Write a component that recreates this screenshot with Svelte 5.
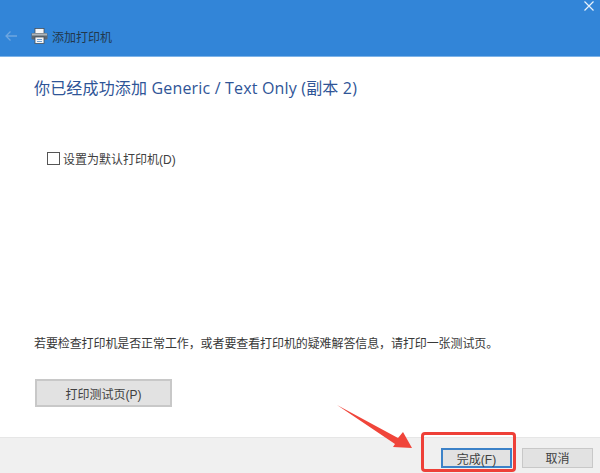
<script>
  let setDefault = false;
</script>

<div class="dialog">
  <header class="titlebar">
    <button class="close" aria-label="关闭">
      <svg width="10" height="10" viewBox="0 0 10 10"><path d="M0.5 0.5 L9.5 9.5 M9.5 0.5 L0.5 9.5" stroke="#e8f2fc" stroke-width="1.2" fill="none" /></svg>
    </button>
    <div class="nav">
      <svg class="back" width="14" height="12" viewBox="0 0 14 12"><path d="M13 6 H2 M6.5 1.5 L2 6 L6.5 10.5" stroke="#6ea6e0" stroke-width="1.3" fill="none" /></svg>
      <svg class="printer" width="17" height="16" viewBox="0 0 17 16">
        <rect x="4" y="0.5" width="9" height="5" fill="#f4f6f8" stroke="#46505a" stroke-width="0.8" />
        <rect x="0.5" y="5" width="16" height="6.5" rx="1" fill="#5e6870" />
        <rect x="1" y="5.5" width="15" height="2" fill="#aeb6bc" />
        <rect x="4" y="9" width="9" height="6.5" fill="#f4f6f8" stroke="#46505a" stroke-width="0.8" />
        <path d="M6 11.5 H11 M6 13.5 H11" stroke="#4a88c8" stroke-width="0.8" />
      </svg>
      <span class="wintitle">添加打印机</span>
    </div>
  </header>

  <main class="content">
    <h1>你已经成功添加 Generic / Text Only (副本 2)</h1>
    <label class="check">
      <input type="checkbox" bind:checked={setDefault} />
      <span>设置为默认打印机(D)</span>
    </label>
    <div class="spacer"></div>
    <p>若要检查打印机是否正常工作，或者要查看打印机的疑难解答信息，请打印一张测试页。</p>
    <button class="btn testpage">打印测试页(P)</button>
  </main>

  <footer class="actions">
    <button class="btn primary">完成(F)</button>
    <button class="btn">取消</button>
    <div class="highlight"></div>
    <svg class="arrow" width="80" height="48" viewBox="0 0 80 48">
      <path d="M1 4 L62 37 L67 31 L76 47 L57 46 L59 43 Z" fill="#f0453a" />
    </svg>
  </footer>
</div>

<style>
  :global(body) {
    margin: 0;
    background: #fff;
  }

  .dialog {
    width: 600px;
    height: 473px;
    display: flex;
    flex-direction: column;
    font-family: "Liberation Sans", "Noto Sans CJK SC", sans-serif;
    color: #3a3a3a;
    overflow: hidden;
  }

  .titlebar {
    position: relative;
    height: 57px;
    flex: none;
    box-sizing: border-box;
    background: #3285d8;
    border-bottom: 1px solid #7db3e8;
    display: flex;
    align-items: flex-end;
  }

  .close {
    position: absolute;
    top: 1px;
    right: 6px;
    padding: 0;
    border: 0;
    background: none;
    display: flex;
  }

  .nav {
    display: flex;
    align-items: center;
    height: 20px;
    margin-bottom: 10px;
    padding-left: 4px;
  }

  .printer {
    margin-left: 13px;
  }

  .wintitle {
    margin-left: 4px;
    font-size: 12px;
    color: #22384c;
  }

  .content {
    flex: 1;
    display: flex;
    flex-direction: column;
    align-items: flex-start;
    padding: 21px 0 0 34px;
  }

  h1 {
    margin: 0;
    font-family: "Open Sans", "Noto Sans CJK SC", sans-serif;
    font-size: 16px;
    font-weight: 400;
    line-height: 20px;
    letter-spacing: 0.17px;
    color: #2f5597;
  }

  .check {
    display: flex;
    align-items: center;
    margin-top: 52px;
    margin-left: 13px;
    font-size: 12px;
    color: #404040;
  }

  .check input {
    appearance: none;
    width: 13px;
    height: 13px;
    margin: 0 3px 0 0;
    border: 1px solid #555;
    background: #fff;
  }

  .spacer {
    flex: 1;
  }

  p {
    margin: 0;
    font-size: 12px;
    line-height: 16px;
    letter-spacing: -0.1px;
    color: #383838;
  }

  .btn {
    width: 71px;
    height: 20px;
    padding: 0;
    box-sizing: border-box;
    border: 1px solid #c8c8c8;
    background: #e2e2e2;
    font: inherit;
    font-size: 12px;
    color: #404040;
  }

  .testpage {
    width: 137px;
    height: 28px;
    margin-top: 27px;
    margin-bottom: 30px;
    margin-left: 1px;
    border-width: 2px;
  }

  .actions {
    position: relative;
    height: 36px;
    flex: none;
    box-sizing: border-box;
    background: #f0f0f0;
    border-top: 1px solid #e6e6e6;
    display: flex;
    justify-content: flex-end;
    align-items: center;
    gap: 10px;
    padding: 4px 7px 0 0;
  }

  .actions .primary {
    border: 2px solid #3c82c8;
  }

  .highlight {
    position: absolute;
    left: 421px;
    top: -6px;
    width: 95px;
    height: 40px;
    box-sizing: border-box;
    border: 3px solid #ee4038;
    border-radius: 4px;
  }

  .arrow {
    position: absolute;
    left: 336px;
    top: -37px;
  }
</style>
